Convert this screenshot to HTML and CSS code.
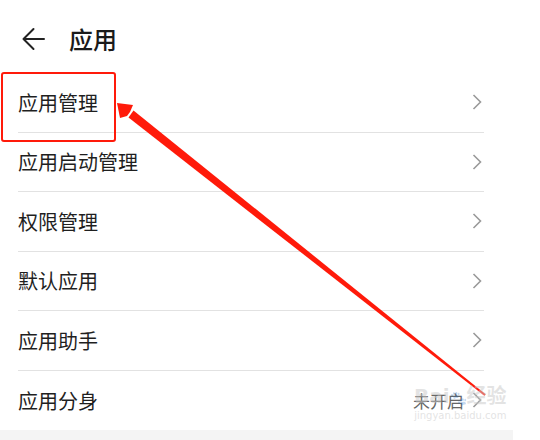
FILE: index.html
```html
<!DOCTYPE html>
<html lang="zh-CN">
<head>
  <meta charset="UTF-8" />
  <meta name="viewport" content="width=device-width, initial-scale=1.0" />
  <title>应用</title>
  <link rel="stylesheet" href="styles.css">
</head>
<body>

  <div class="page">
    <header class="topbar">
      <svg class="back" width="24" height="24" viewBox="0 0 24 24">
        <path d="M23 12H2.5M12.5 2L2.5 12l10 10" fill="none" stroke="#222" stroke-width="2" stroke-linecap="round" stroke-linejoin="round"/>
      </svg>
      <h1>应用</h1>
    </header>

    <ul class="menu">
      <li class="item"><span>应用管理</span><svg class="chev" width="10" height="16" viewBox="0 0 10 16"><path d="M1.5 1l7 7-7 7" /></svg></li>
      <li class="item"><span>应用启动管理</span><svg class="chev" width="10" height="16" viewBox="0 0 10 16"><path d="M1.5 1l7 7-7 7" /></svg></li>
      <li class="item"><span>权限管理</span><svg class="chev" width="10" height="16" viewBox="0 0 10 16"><path d="M1.5 1l7 7-7 7" /></svg></li>
      <li class="item"><span>默认应用</span><svg class="chev" width="10" height="16" viewBox="0 0 10 16"><path d="M1.5 1l7 7-7 7" /></svg></li>
      <li class="item"><span>应用助手</span><svg class="chev" width="10" height="16" viewBox="0 0 10 16"><path d="M1.5 1l7 7-7 7" /></svg></li>
      <li class="item last"><span>应用分身</span><em class="state">未开启</em><svg class="chev" width="10" height="16" viewBox="0 0 10 16"><path d="M1.5 1l7 7-7 7" /></svg></li>
    </ul>

    <div class="band"></div>
  </div>

  <!-- annotation on top of the screenshot -->
  <div class="mark-box"></div>
  <svg class="mark-arrow" width="540" height="440" viewBox="0 0 540 440">
    <polygon points="128.5,117.5 133.5,110.5 485.6,394.2 484.4,395.8" fill="#ff1a0a"/>
    <polygon points="117,103 133,105 130,112 127,116 120,118" fill="#ff1a0a"/>
  </svg>

  <div class="watermark">
    <div class="wm-top">Bai<b>🐾</b>经验</div>
    <div class="wm-url">jingyan.baidu.com</div>
  </div>

</body>
</html>
```

FILE: styles.css
```css
body {
  margin: 0;
  background: #fff;
  font-family: "Noto Sans CJK SC", "Noto Sans", sans-serif;
  color: #1f1f1f;
}

.page {
  width: 513px;
  height: 440px;
  background: #fff;
  display: flex;
  flex-direction: column;
}

.topbar {
  height: 73px;
  display: flex;
  align-items: flex-start;
  padding: 27px 0 0 21px;
  box-sizing: border-box;
  flex-shrink: 0;
}

.topbar h1 {
  margin: 0 0 0 24px;
  font-size: 24px;
  line-height: 24px;
  font-weight: 500;
  color: #1a1a1a;
}

.menu {
  list-style: none;
  margin: 0 0 0 18px;
  padding: 0;
  width: 466px;
}

.item {
  height: 59.5px;
  box-sizing: border-box;
  border-bottom: 1px solid #e2e2e2;
  display: flex;
  align-items: center;
  font-size: 20px;
  padding-right: 2px;
}

.item span {
  flex: 1;
}

.item.last {
  border-bottom: none;
}

.state {
  font-style: normal;
  font-size: 17px;
  color: #666;
  margin-right: 8px;
}

.chev path {
  fill: none;
  stroke: #9a9a9a;
  stroke-width: 1.6;
  stroke-linejoin: miter;
}

.band {
  margin-top: auto;
  height: 12px;
  background: #f4f4f4;
}

.mark-box {
  position: absolute;
  left: 1px;
  top: 72px;
  width: 111px;
  height: 66px;
  border: 2px solid #ff1a0a;
  border-radius: 3px;
}

.mark-arrow {
  position: absolute;
  left: 0;
  top: 0;
}

.watermark {
  position: absolute;
  left: 414px;
  top: 384px;
  color: rgba(200, 200, 200, 0.5);
  font-family: "DejaVu Sans", "Noto Sans CJK SC", sans-serif;
  text-align: center;
}

.wm-top {
  font-size: 20px;
  font-weight: 700;
  line-height: 24px;
}

.wm-top b {
  font-size: 14px;
  opacity: 0.5;
}

.wm-url {
  font-size: 10px;
  line-height: 12px;
}
```
